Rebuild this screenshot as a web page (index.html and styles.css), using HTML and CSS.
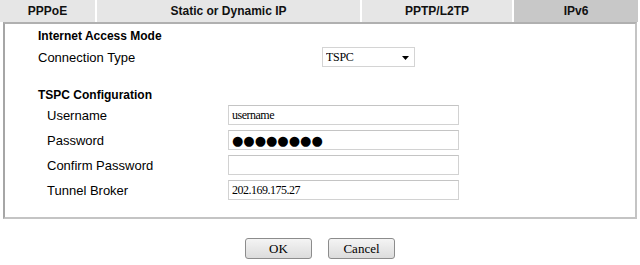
FILE: index.html
```html
<!DOCTYPE html>
<html>
<head>
  <title>WAN - IPv6</title>
  <link rel="stylesheet" href="styles.css">
</head>
<body>

<div class="tabs">
  <div class="tab tab-pppoe">PPPoE</div>
  <div class="tab tab-static">Static or Dynamic IP</div>
  <div class="tab tab-pptp">PPTP/L2TP</div>
  <div class="tab tab-ipv6 active">IPv6</div>
</div>

<div class="panel">
  <div class="section-title">Internet Access Mode</div>
  <div class="row row-mode">
    <label for="connType">Connection Type</label>
    <span class="select-wrap">
      <select id="connType">
        <option>TSPC</option>
      </select>
      <svg class="arrow" width="7" height="4" viewBox="0 0 7 4"><path d="M0 0H7L3.5 4Z" fill="#000"/></svg>
    </span>
  </div>

  <div class="section-title section-gap">TSPC Configuration</div>
  <div class="row row-first">
    <label for="username">Username</label>
    <input type="text" id="username" value="username">
  </div>
  <div class="row">
    <label for="password">Password</label>
    <input type="text" id="password" class="dots" value="&#9679;&#9679;&#9679;&#9679;&#9679;&#9679;&#9679;&#9679;">
  </div>
  <div class="row">
    <label for="confirm">Confirm Password</label>
    <input type="text" id="confirm" value="">
  </div>
  <div class="row">
    <label for="broker">Tunnel Broker</label>
    <input type="text" id="broker" value="202.169.175.27">
  </div>
</div>

<div class="buttons">
  <button>OK</button>
  <button>Cancel</button>
</div>

</body>
</html>
```

FILE: styles.css
```css
body {
  font-family: 'Liberation Sans', Arial, sans-serif;
  font-size: 13px;
  color: #000;
  background: #fff;
  margin: 0;
  padding: 0;
}

.tabs {
  display: flex;
  gap: 2px;
  height: 22px;
}

.tab {
  background-color: #e6e6e6;
  font-weight: bold;
  font-size: 12px;
  text-align: center;
  line-height: 22px;
  color: #111;
}

.tab-pppoe { width: 95px; }
.tab-static { width: 263px; }
.tab-pptp { width: 150px; }
.tab-ipv6 { width: 124px; }

.tab.active {
  background-color: #c8c8c8;
}

.panel {
  margin-left: 3px;
  width: 630px;
  border: 2px solid #c4c4c4;
  border-left-color: #a6a6a6;
  border-top-color: #b0b0b0;
  padding: 4px 0 17px 0;
}

.section-title {
  font-weight: bold;
  font-size: 12px;
  padding-left: 33px;
  line-height: 16px;
}

.section-gap {
  margin-top: 20px;
}

.row {
  display: flex;
  align-items: center;
  height: 20px;
  margin-top: 5px;
}

.row-first {
  margin-top: 2px;
}

.row label {
  width: 181px;
  padding-left: 42px;
}

.row-mode {
  margin-top: 3px;
}

.row-mode label {
  width: 284px;
  padding-left: 33px;
}

.select-wrap {
  position: relative;
  display: inline-block;
  height: 20px;
}

select {
  appearance: none;
  -webkit-appearance: none;
  width: 93px;
  height: 20px;
  font-family: 'Liberation Serif', serif;
  font-size: 12px;
  letter-spacing: -0.3px;
  border: 1px solid #d4d4d4;
  border-radius: 0;
  background: #fff;
  padding: 0 3px;
  color: #000;
}

.arrow {
  position: absolute;
  right: 6px;
  top: 9px;
}

input[type="text"] {
  width: 231px;
  height: 20px;
  box-sizing: border-box;
  border: 1px solid #d2d2d2;
  border-top-color: #c4c4c4;
  padding: 0 3px;
  font-family: 'Liberation Serif', serif;
  font-size: 12px;
  letter-spacing: -0.5px;
}

input.dots {
  font-family: 'DejaVu Sans', sans-serif;
  font-size: 13px;
  letter-spacing: 0;
}

.buttons {
  display: flex;
  justify-content: center;
  gap: 16px;
  margin-top: 19px;
}

button {
  width: 67px;
  height: 21px;
  font-family: 'Liberation Serif', serif;
  font-size: 13px;
  border: 1px solid #8c8c8c;
  border-radius: 3px;
  background: linear-gradient(#f4f4f4, #dcdcdc);
  color: #000;
}
```
